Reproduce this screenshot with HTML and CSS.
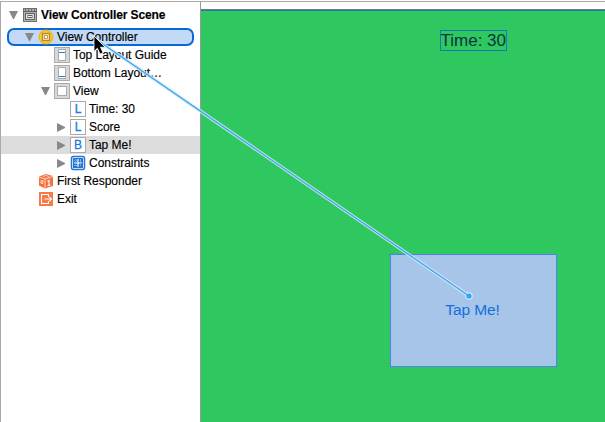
FILE: index.html
```
<!DOCTYPE html>
<html lang="en">
<head>
<meta charset="utf-8">
<title>View Controller Scene</title>
<link rel="stylesheet" href="styles.css">
</head>
<body>
<div class="editor">
  <nav class="outline">
    <div class="row scene"><i class="arrow down"></i>
      <svg class="icon" viewBox="0 0 16 16"><rect x="1.500" y="1.500" width="13" height="13" fill="#b5b5b5" stroke="#707070"/><path d="M1 4.500h14M3 2l1 2M6 2l1 2M9 2l1 2M12 2l1 2" stroke="#606060"/><rect x="3.500" y="6.500" width="9" height="6" fill="#ddd" stroke="#606060"/><rect x="6" y="8.500" width="4" height="2" fill="#eee" stroke="#606060"/></svg>
      <span class="label">View Controller Scene</span></div>
    <div class="row selected l1"><i class="arrow down"></i>
      <svg class="icon" viewBox="0 0 16 16"><circle cx="8" cy="8" r="7" fill="#fdc527" stroke="#efae14"/><rect x="4.500" y="4.500" width="7" height="7" fill="#fbe3a0" stroke="#a88a3c" stroke-width="1.200"/><rect x="6.500" y="6.500" width="3" height="3" fill="#fff" stroke="#b8902d" stroke-width=".8"/></svg>
      <span class="label">View Controller</span></div>
    <div class="row l2"><i class="arrow"></i>
      <svg class="icon" viewBox="0 0 16 16"><rect x=".5" y=".5" width="15" height="15" fill="#d8d8d8" stroke="#aaa"/><rect x="4.500" y="2.500" width="7" height="11" fill="#fff" stroke="#aaa"/><path d="M5 5.500h6" stroke="#1785e5"/></svg>
      <span class="label">Top Layout Guide</span></div>
    <div class="row l2"><i class="arrow"></i>
      <svg class="icon" viewBox="0 0 16 16"><rect x=".5" y=".5" width="15" height="15" fill="#d8d8d8" stroke="#aaa"/><rect x="4.500" y="2.500" width="7" height="11" fill="#fff" stroke="#aaa"/><path d="M5 11.500h6" stroke="#1785e5"/></svg>
      <span class="label">Bottom Layout…</span></div>
    <div class="row l2"><i class="arrow down"></i>
      <svg class="icon" viewBox="0 0 16 16"><rect x=".5" y=".5" width="15" height="15" fill="#d8d8d8" stroke="#aaa"/><rect x="3.500" y="3.500" width="9" height="9" fill="#fff" stroke="#aaa"/></svg>
      <span class="label">View</span></div>
    <div class="row l3"><i class="arrow"></i><b class="icon letter">L</b><span class="label">Time: 30</span></div>
    <div class="row l3"><i class="arrow right"></i><b class="icon letter">L</b><span class="label">Score</span></div>
    <div class="row l3 current"><i class="arrow right"></i><b class="icon letter">B</b><span class="label">Tap Me!</span></div>
    <div class="row l3"><i class="arrow right"></i>
      <svg class="icon" viewBox="0 0 16 16"><rect x="1.500" y="1.500" width="13" height="13" rx="2" fill="#fff" stroke="#2376d2" stroke-width="1.500"/><rect x="3.500" y="3.500" width="9" height="9" fill="#2376d2" stroke="#2376d2"/><path d="M4 8h8M8 4v8" stroke="#fff" stroke-width="1.200"/><path d="M4 5.500h8M4 10.500h8M5.500 4v8M10.500 4v8" stroke="#9dc5f0" stroke-width=".7" stroke-dasharray="1 1"/></svg>
      <span class="label">Constraints</span></div>
    <div class="row l1"><i class="arrow"></i>
      <svg class="icon" viewBox="0 0 16 16"><path d="M1 3.500L8 1l7 2v10l-8 2.500-6-3z" fill="#f4713d"/><path d="M1 4l6 2 8-2.500M7 6v9.500" fill="none" stroke="#fff" stroke-width=".7"/><ellipse cx="4" cy="9" rx="1" ry="1.800" fill="none" stroke="#fff" stroke-width=".8"/><path d="M9.500 8.500l1.500-1v5M9.500 12.800l3-.8" fill="none" stroke="#fff" stroke-width="1.100"/><path d="M5 3.500l3-1 3 1" fill="none" stroke="#fff" stroke-width=".6"/></svg>
      <span class="label">First Responder</span></div>
    <div class="row l1"><i class="arrow"></i>
      <svg class="icon" viewBox="0 0 16 16"><rect x="1" y="1" width="14" height="14" fill="#f57a45"/><path d="M10.500 6V3.500h-7v9h7V10M6.500 8h7M11.500 6l2 2-2 2" fill="none" stroke="#fff" stroke-width="1.100"/></svg>
      <span class="label">Exit</span></div>
  </nav>
  <main class="canvas"><div class="scene-view">
    <div class="time"><span>Time: 30</span></div>
    <div class="button"><span>Tap Me!</span></div>
  </div></main>
</div>
<svg class="connection" viewBox="0 0 605 422">
  <path d="M97 40L469 296" stroke="#d7e9f4" stroke-width="3.400" stroke-opacity=".85"/>
  <circle cx="469" cy="296" r="3.700" fill="#d7e9f4"/>
  <path d="M97 40L469 296" stroke="#38a7f6" stroke-width="1.350"/>
  <circle cx="469" cy="296" r="2.600" fill="#2da5ff"/>
  <path d="M94 36v15.500l3.400-3.200 2.700 5.700 3-1.300-2.600-5.500h4.700z" fill="#000" stroke="#fff" stroke-width=".8"/>
</svg>
</body>
</html>
```
FILE: styles.css
```
* { box-sizing: border-box; }
body {
  margin: 0;
  width: 605px;
  height: 422px;
  overflow: hidden;
  background: #fff;
  font: 12px "Liberation Sans", Arial, sans-serif;
  color: #000;
}
.editor {
  display: flex;
  height: 422px;
  padding-top: 1px;
}
.outline {
  flex: none;
  width: 201px;
  padding-top: 4px;
  border-top: 1px solid #aaa;
  border-left: 1px solid #aaa;
  border-right: 1px solid #999;
}
.row {
  display: flex;
  align-items: center;
  height: 18px;
  padding-left: 8px;
}
.scene { margin-bottom: 4px; font-weight: bold; }
.scene .label { letter-spacing: -.1px; }
.l1 { padding-left: 24px; }
.l2 { padding-left: 40px; }
.l3 { padding-left: 56px; }
.selected {
  margin: 0 6px;
  padding-left: 16px;
  border: 2px solid #0768d9;
  border-radius: 7px;
  background: #c2daf5;
}
.current { background: #dcdcdc; }
.arrow {
  width: 9px;
  margin-right: 4px;
  flex: none;
}
.down { border: solid transparent; border-width: 8px 4.5px 0; border-top-color: #888; }
.right { height: 9px; border: solid transparent; border-width: 4.5px 0 4.5px 8px; border-left-color: #888; }
.icon {
  width: 16px;
  height: 16px;
  margin-right: 3px;
  flex: none;
}
.letter {
  border: 1px solid #aaa;
  background: #fff;
  color: #147de8;
  font-size: 12px;
  font-weight: normal;
  line-height: 15px;
  text-align: center;
  -webkit-text-stroke: .3px #147de8;
}
.label {
  letter-spacing: -.03px;
  line-height: 18px;
  white-space: nowrap;
  -webkit-text-stroke: .15px #000;
}
.canvas {
  flex: 1;
  padding-top: 7px;
  border-top: 1px solid #aaa;
}
.scene-view {
  height: 413px;
  border-top: 1px solid #777;
  box-shadow: inset 0 1px #167fb5;
  background: #2fc75f;
  display: flex;
  flex-direction: column;
  align-items: flex-start;
}
.time {
  width: 67px;
  height: 21px;
  margin: 20px 0 0 239px;
  border: 1px solid #1779b5;
  color: #0c3444;
  font-size: 17px;
  line-height: 19px;
  text-indent: -.5px;
  white-space: nowrap;
}
.button {
  display: flex;
  justify-content: center;
  align-items: center;
  width: 167px;
  height: 113px;
  margin: 203px 0 0 189px;
  padding: 0 2px 2px 0;
  border: 1px solid #4c83ed;
  background: #a6c5e8;
  color: #126fde;
  font-size: 15.5px;
  letter-spacing: -.1px;
}
.connection {
  position: absolute;
  left: 0;
  top: 0;
  width: 605px;
  height: 422px;
  fill: none;
}
```
